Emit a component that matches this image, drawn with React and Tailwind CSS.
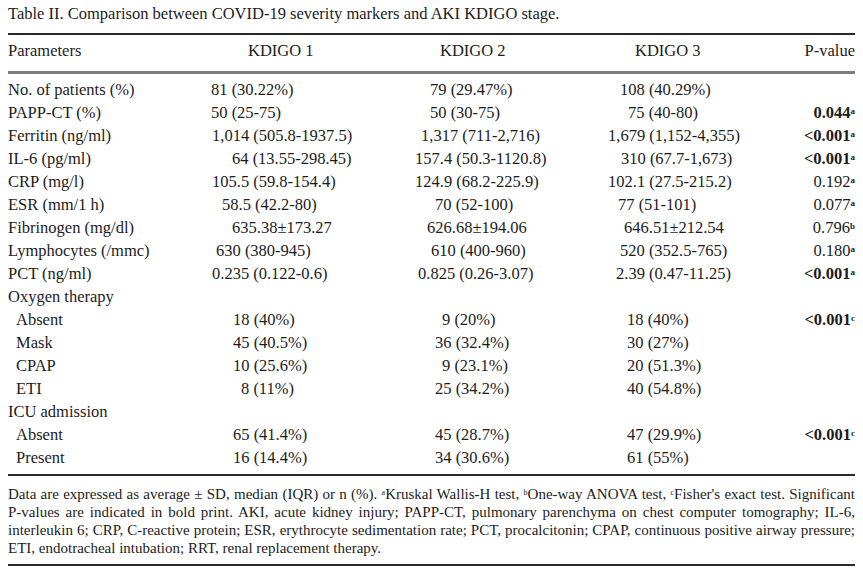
import React from "react";

const rows = [
  { label: "No. of patients (%)", c1: ["81 (30.22%)", "pl-[0px]"], c2: ["79 (29.47%)", "pl-[16px]"], c3: ["108 (40.29%)", "pl-[12px]"] },
  { label: "PAPP-CT (%)", c1: ["50 (25-75)", "pl-[0px]"], c2: ["50 (30-75)", "pl-[16px]"], c3: ["75 (40-80)", "pl-[20px]"], p: ["0.044", "a", true] },
  { label: "Ferritin (ng/ml)", c1: ["1,014 (505.8-1937.5)", "pl-[1px]"], c2: ["1,317 (711-2,716)", "pl-[7px]"], c3: ["1,679 (1,152-4,355)", "pl-[0px]"], p: ["<0.001", "a", true] },
  { label: "IL-6 (pg/ml)", c1: ["64 (13.55-298.45)", "pl-[21px]"], c2: ["157.4 (50.3-1120.8)", "pl-[1px]"], c3: ["310 (67.7-1,673)", "pl-[13px]"], p: ["<0.001", "a", true] },
  { label: "CRP (mg/l)", c1: ["105.5 (59.8-154.4)", "pl-[1px]"], c2: ["124.9 (68.2-225.9)", "pl-[1px]"], c3: ["102.1 (27.5-215.2)", "pl-[0px]"], p: ["0.192", "a"] },
  { label: "ESR (mm/1 h)", c1: ["58.5 (42.2-80)", "pl-[11px]"], c2: ["70 (52-100)", "pl-[21px]"], c3: ["77 (51-101)", "pl-[10px]"], p: ["0.077", "a"] },
  { label: "Fibrinogen (mg/dl)", c1: ["635.38±173.27", "pl-[21px]"], c2: ["626.68±194.06", "pl-[13px]"], c3: ["646.51±212.54", "pl-[16px]"], p: ["0.796", "b"] },
  { label: "Lymphocytes (/mmc)", c1: ["630 (380-945)", "pl-[5px]"], c2: ["610 (400-960)", "pl-[17px]"], c3: ["520 (352.5-765)", "pl-[12px]"], p: ["0.180", "a"] },
  { label: "PCT (ng/ml)", c1: ["0.235 (0.122-0.6)", "pl-[1px]"], c2: ["0.825 (0.26-3.07)", "pl-[4px]"], c3: ["2.39 (0.47-11.25)", "pl-[8px]"], p: ["<0.001", "a", true] },
  { label: "Oxygen therapy" },
  { label: "Absent", sub: true, c1: ["18 (40%)", "pl-[22px]"], c2: ["9 (20%)", "pl-[28px]"], c3: ["18 (40%)", "pl-[19px]"], p: ["<0.001", "c", true] },
  { label: "Mask", sub: true, c1: ["45 (40.5%)", "pl-[22px]"], c2: ["36 (32.4%)", "pl-[21px]"], c3: ["30 (27%)", "pl-[19px]"] },
  { label: "CPAP", sub: true, c1: ["10 (25.6%)", "pl-[22px]"], c2: ["9 (23.1%)", "pl-[28px]"], c3: ["20 (51.3%)", "pl-[19px]"] },
  { label: "ETI", sub: true, c1: ["8 (11%)", "pl-[30px]"], c2: ["25 (34.2%)", "pl-[21px]"], c3: ["40 (54.8%)", "pl-[19px]"] },
  { label: "ICU admission" },
  { label: "Absent", sub: true, c1: ["65 (41.4%)", "pl-[22px]"], c2: ["45 (28.7%)", "pl-[21px]"], c3: ["47 (29.9%)", "pl-[19px]"], p: ["<0.001", "c", true] },
  { label: "Present", sub: true, c1: ["16 (14.4%)", "pl-[22px]"], c2: ["34 (30.6%)", "pl-[21px]"], c3: ["61 (55%)", "pl-[19px]"] },
];

function Cell({ value, className }) {
  if (!value) return <div className={className} />;
  return (
    <div className={className}>
      <span className={value[1]}>{value[0]}</span>
    </div>
  );
}

function PValue({ p }) {
  if (!p) return <div className="flex-1" />;
  return (
    <div className="flex-1 text-right">
      <span className={p[2] ? "font-bold" : ""}>{p[0]}</span>
      <sup className="text-[9px] font-bold">{p[1]}</sup>
    </div>
  );
}

export default function App() {
  return (
    <div className="font-['Liberation_Serif']">
    <div className="w-[863px] h-[571px] bg-white text-[#1c1c1c] px-[8px] pt-[4px] overflow-hidden">
      <div className="text-[16.5px] leading-[20px]">
        Table II. Comparison between COVID-19 severity markers and AKI KDIGO stage.
      </div>

      <div className="mt-[9px] h-[2px] bg-[#2a2a2a]" />

      <div className="flex h-[36px] pt-[6px] text-[16.5px] leading-[20px]">
        <div className="w-[203px]">Parameters</div>
        <div className="w-[203px] pl-[37px]">KDIGO 1</div>
        <div className="w-[194px] pl-[26px]">KDIGO 2</div>
        <div className="w-[140px] pl-[27px]">KDIGO 3</div>
        <div className="flex-1 text-right">P-value</div>
      </div>

      <div className="h-[3px] bg-[#7d7d7d]" />

      <div className="pt-[4px] pb-[5px] text-[16.5px] leading-[23px]">
        {rows.map((r, i) => (
          <div key={i} className="flex h-[23px]">
            <div className={r.sub ? "w-[203px] pl-[8px]" : "w-[203px]"}>{r.label}</div>
            <Cell value={r.c1} className="w-[203px]" />
            <Cell value={r.c2} className="w-[194px]" />
            <Cell value={r.c3} className="w-[140px]" />
            <PValue p={r.p} />
          </div>
        ))}
      </div>

      <div className="h-[2px] bg-[#2a2a2a]" />

      <div className="pt-[9px] pb-[7px] text-[15px] leading-[18px]">
        <div className="text-justify [text-align-last:justify] whitespace-nowrap">
          Data are expressed as average ± SD, median (IQR) or n (%). <sup className="text-[8px]">a</sup>Kruskal Wallis-H test, <sup className="text-[8px]">b</sup>One-way ANOVA test, <sup className="text-[8px]">c</sup>Fisher&apos;s exact test. Significant
        </div>
        <div className="text-justify [text-align-last:justify] whitespace-nowrap">
          P-values are indicated in bold print. AKI, acute kidney injury; PAPP-CT, pulmonary parenchyma on chest computer tomography; IL-6,
        </div>
        <div className="text-justify [text-align-last:justify] whitespace-nowrap">
          interleukin 6; CRP, C-reactive protein; ESR, erythrocyte sedimentation rate; PCT, procalcitonin; CPAP, continuous positive airway pressure;
        </div>
        <div>ETI, endotracheal intubation; RRT, renal replacement therapy.</div>
      </div>

      <div className="h-[2px] bg-[#2a2a2a]" />
    </div>
    </div>
  );
}
